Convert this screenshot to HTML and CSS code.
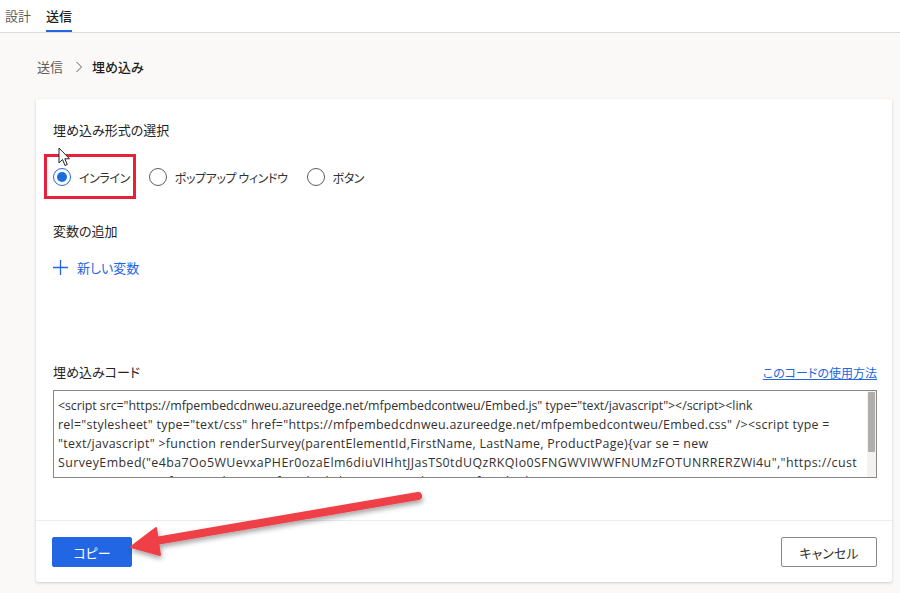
FILE: index.html
```html
<!DOCTYPE html>
<html lang="ja">

<head>
    <meta charset="UTF-8" />
    <title>送信 - 埋め込み</title>
    <link rel="stylesheet" href="styles.css">
</head>

<body>
    <!-- タブ -->
    <div class="topbar">
        <span class="tab">設計</span>
        <span class="tab active">送信</span>
    </div>

    <div class="page">
        <!-- パンくず -->
        <div class="breadcrumb">
            <span class="crumb">送信</span>
            <svg class="sep" width="8" height="12" viewBox="0 0 8 12">
                <path d="M1.5 1 L6.5 6 L1.5 11" fill="none" stroke="#605e5c" stroke-width="1" />
            </svg>
            <span class="crumb current">埋め込み</span>
        </div>

        <div class="card">
            <div class="card-body">
                <div class="label">埋め込み形式の選択</div>
                <div class="radios">
                    <label class="radio checked">
                        <span class="dot"></span>インライン
                        <span class="highlight"></span>
                        <svg class="cursor" width="13" height="20" viewBox="0 0 13 20">
                            <path d="M1 1 L1 16 L4.5 12.5 L7 18.5 L9.3 17.5 L6.8 11.8 L11.5 11.8 Z" fill="#fff" stroke="#222" stroke-width="1" stroke-linejoin="round" />
                        </svg>
                    </label>
                    <label class="radio"><span class="dot"></span>ポップアップ ウィンドウ</label>
                    <label class="radio"><span class="dot"></span>ボタン</label>
                </div>

                <div class="label vars">変数の追加</div>
                <div class="add-var">
                    <svg width="15" height="15" viewBox="0 0 15 15">
                        <path d="M7.5 0 V15 M0 7.5 H15" stroke="#2266e3" stroke-width="1.3" />
                    </svg>
                    <span>新しい変数</span>
                </div>

                <div class="code-head">
                    <span class="label">埋め込みコード</span>
                    <a class="help" href="#">このコードの使用方法</a>
                </div>
                <div class="code">
                    <div class="code-text">
                        <div class="l1">&lt;script src="https://mfpembedcdnweu.azureedge.net/mfpembedcontweu/Embed.js" type="text/javascript"&gt;&lt;/script&gt;&lt;link</div>
                        <div class="l2">rel="stylesheet" type="text/css" href="https://mfpembedcdnweu.azureedge.net/mfpembedcontweu/Embed.css" /&gt;&lt;script type =</div>
                        <div class="l3">"text/javascript" &gt;function renderSurvey(parentElementId,FirstName, LastName, ProductPage){var se = new</div>
                        <div class="l4">SurveyEmbed("e4ba7Oo5WUevxaPHEr0ozaElm6diuVIHhtJJasTS0tdUQzRKQIo0SFNGWVIWWFNUMzFOTUNRRERZWi4u","https://cust</div>
                        <div>omervoice.microsoft.com/","https://mfpembedcdnweu.azureedge.net/mfpembedcontweu/","true");var context = {"First Name":</div>
                    </div>
                    <div class="scrollbar"><div class="thumb"></div></div>
                </div>
            </div>

            <div class="card-foot">
                <button class="btn primary">コピー</button>
                <button class="btn">キャンセル</button>
            </div>
        </div>
    </div>

    <!-- 矢印 -->
    <svg class="arrow" width="900" height="593" viewBox="0 0 900 593">
        <defs>
            <filter id="sh" x="-10%" y="-20%" width="120%" height="160%">
                <feDropShadow dx="1" dy="3" stdDeviation="2.5" flood-color="#000" flood-opacity="0.35" />
            </filter>
        </defs>
        <g filter="url(#sh)" fill="#ef3f47" stroke="#ef3f47">
            <line x1="150" y1="542" x2="418" y2="496" stroke-width="8" stroke-linecap="round" />
            <path d="M131 547 L156 528 L160 555 Z" stroke-width="2" stroke-linejoin="round" />
        </g>
    </svg>
</body>

</html>
```

FILE: styles.css
```css
* {
    box-sizing: border-box;
}

body {
    margin: 0;
    padding: 0;
    width: 900px;
    height: 593px;
    overflow: hidden;
    position: relative;
    background: #faf9f8;
    color: #323130;
    font-family: "Noto Sans CJK JP", "Noto Sans", sans-serif;
    font-size: 13px;
    font-feature-settings: "palt";
}

.topbar {
    height: 33px;
    background: #fff;
    border-bottom: 1px solid #dcdcdc;
    display: flex;
    align-items: stretch;
    padding-left: 5px;
    gap: 15px;
}

.tab {
    display: flex;
    align-items: center;
    font-size: 13px;
    color: #605e5c;
    border-bottom: 2px solid transparent;
    padding-top: 1px;
}

.tab.active {
    color: #201f1e;
    font-weight: 500;
    border-bottom-color: #2266e3;
}

.page {
    padding: 0 8px 0 36px;
}

.breadcrumb {
    height: 66px;
    display: flex;
    align-items: center;
    padding-top: 1px;
    padding-left: 1px;
    font-size: 13px;
}

.crumb {
    color: #605e5c;
}

.crumb.current {
    color: #201f1e;
    font-weight: 500;
    font-feature-settings: normal;
}

.sep {
    margin: 0 9px 0 12px;
}

.card {
    width: 856px;
    background: #fff;
    border-radius: 2px;
    box-shadow: 0 1px 3px rgba(0, 0, 0, 0.18);
}

.card-body {
    padding: 21px 15px 42px 17px;
}

.label {
    line-height: 20px;
    color: #252423;
}

.radios {
    display: flex;
    gap: 19px;
    margin-top: 25px;
    height: 24px;
}

.radio {
    position: relative;
    display: flex;
    align-items: center;
    color: #323130;
    font-size: 12px;
    letter-spacing: -0.4px;
}

.dot {
    width: 18px;
    height: 18px;
    border: 1px solid #605e5c;
    border-radius: 50%;
    margin-right: 8px;
    position: relative;
}

.radio.checked .dot {
    border-color: #2266e3;
}

.radio.checked .dot::after {
    content: "";
    position: absolute;
    inset: 3px;
    border-radius: 50%;
    background: #1a6ed8;
}

.highlight {
    position: absolute;
    left: -9px;
    top: -11px;
    width: 92px;
    height: 45px;
    border: 3px solid #e8203a;
}

.cursor {
    position: absolute;
    left: 5px;
    top: -18px;
}

.vars {
    margin-top: 32px;
}

.add-var {
    margin-top: 16px;
    height: 20px;
    display: flex;
    align-items: center;
    gap: 9px;
    color: #2266e3;
}

.code-head {
    margin-top: 85px;
    display: flex;
    justify-content: space-between;
    align-items: center;
    height: 20px;
}

.help {
    color: #2266e3;
    text-decoration: underline;
    font-size: 12px;
}

.code {
    margin-top: 8px;
    height: 88px;
    border: 1px solid #8a8886;
    position: relative;
    overflow: hidden;
}

.code-text {
    padding: 5px 0 0 4px;
    font-family: "Open Sans", sans-serif;
    font-size: 12.4px;
    line-height: 19px;
    white-space: nowrap;
    color: #323130;
    font-feature-settings: normal;
}

.l1 {
    letter-spacing: -0.06px;
}

.l2 {
    letter-spacing: 0.28px;
}

.l3 {
    letter-spacing: 0.3px;
}

.l4 {
    letter-spacing: 0.42px;
}

.scrollbar {
    position: absolute;
    top: 0;
    right: 0;
    width: 9px;
    height: 100%;
    background: #f3f2f1;
}

.thumb {
    margin: 1px 1px 0 1px;
    height: 60px;
    background: #b0aeac;
    border-radius: 1px;
}

.card-foot {
    border-top: 1px solid #edebe9;
    padding: 16px 15px 15px 16px;
    display: flex;
    justify-content: space-between;
}

.btn {
    height: 30px;
    min-width: 96px;
    padding: 0 16px;
    font-family: "Noto Sans CJK JP", sans-serif;
    font-size: 13px;
    font-feature-settings: "palt";
    background: #fff;
    color: #323130;
    border: 1px solid #8a8886;
    border-radius: 2px;
}

.btn.primary {
    min-width: 80px;
    background: #2266e3;
    border-color: #2266e3;
    color: #fff;
}

.arrow {
    position: absolute;
    left: 0;
    top: 0;
    pointer-events: none;
}
```
